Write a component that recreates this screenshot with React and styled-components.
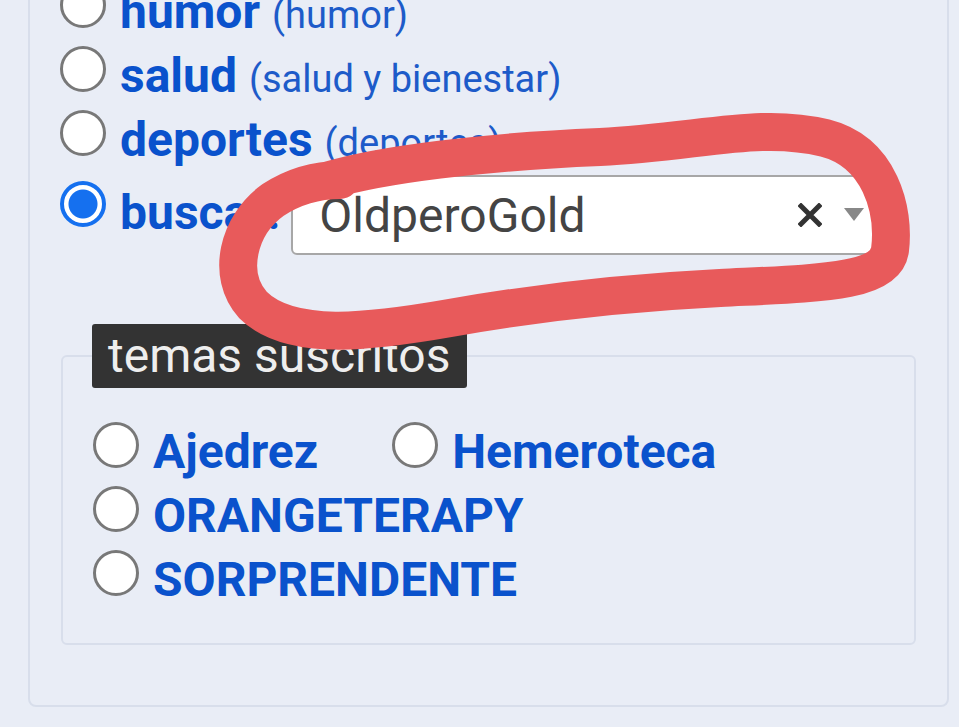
import React from 'react'
import styled, { createGlobalStyle } from 'styled-components'

const GlobalStyle = createGlobalStyle`
    html, body {
        margin: 0;
        padding: 0;
        background: #e9edf6;
        font-family: Roboto, "Liberation Sans", sans-serif;
        overflow: hidden;
    }
`

const Page = styled.div`
    position: relative;
    display: flow-root;
    width: 959px;
    box-sizing: border-box;
    padding: 0 10px 18px 28px;
`

const Panel = styled.div`
    margin-top: -42px;
    border: 2px solid #d8deeb;
    border-radius: 8px;
    padding: 13px 31px 60px 30px;
`

const Row = styled.label`
    display: flex;
    align-items: ${(p) => (p.top ? 'flex-start' : 'center')};
    height: ${(p) => (p.top ? 'auto' : '64px')};
    gap: 14px;
    cursor: pointer;
`

const Radio = styled.input.attrs({ type: 'radio' })`
    appearance: none;
    flex: none;
    margin: ${(p) => p.$offset || 0}px 0 0 0;
    width: 46px;
    height: 46px;
    border-radius: 50%;
    border: 3px solid #787878;
    background: #fff;
    box-sizing: border-box;

    &:checked {
        border: 4px solid #1570ef;
        background: radial-gradient(circle, #1570ef 0 14px, #fff 15px);
    }
`

const Name = styled.span`
    font-weight: 700;
    font-size: 48px;
    color: #0a52cc;
    white-space: nowrap;
    padding-top: ${(p) => (p.$offset === undefined ? 13 : 0)}px;
    margin-top: ${(p) => p.$offset || 0}px;
`

const Desc = styled.span`
    font-weight: 400;
    font-size: 38px;
    color: #1d5bc9;
    margin-left: 12px;
`

const Select = styled.div`
    flex: none;
    display: flex;
    align-items: center;
    width: 597px;
    height: 80px;
    margin: 10px 0 0 -3px;
    box-sizing: border-box;
    border: 2px solid #a7a7a7;
    border-radius: 6px;
    background: #fff;
    padding: 0 22px 0 26px;
    font-size: 48px;
    color: #444;
`

const Value = styled.span`
    flex: 1;
`

const Fieldset = styled.fieldset`
    margin: 69px 0 0 1px;
    border: 2px solid #d8deeb;
    border-radius: 6px;
    padding: 25px 30px 38px 30px;
`

const Legend = styled.legend`
    background: #333;
    color: #eeeeee;
    font-size: 48px;
    line-height: 64px;
    padding: 0 16px;
    border-radius: 3px;
    margin-left: -1px;
`

const Topics = styled.div`
    display: flex;
    flex-wrap: wrap;
    column-gap: 74px;
`

const Scribble = styled.svg`
    position: absolute;
    top: 0;
    left: 0;
    pointer-events: none;
`

const topics = ['Ajedrez', 'Hemeroteca', 'ORANGETERAPY', 'SORPRENDENTE']

export default function App() {
    return (
        <Page>
            <GlobalStyle />
            <Panel>
                <Row>
                    <Radio name="tema" />
                    <Name>humor<Desc>(humor)</Desc></Name>
                </Row>
                <Row>
                    <Radio name="tema" />
                    <Name>salud<Desc>(salud y bienestar)</Desc></Name>
                </Row>
                <Row>
                    <Radio name="tema" />
                    <Name>deportes<Desc>(deportes)</Desc></Name>
                </Row>
                <Row top>
                    <Radio name="tema" defaultChecked $offset={16} />
                    <Name $offset={19}>buscar:</Name>
                    <Select>
                        <Value>OldperoGold</Value>
                        <svg width="24" height="24" viewBox="0 0 24 24">
                            <path d="M3 3 L21 21 M21 3 L3 21" stroke="#333" strokeWidth="5" strokeLinecap="square" />
                        </svg>
                        <svg width="20" height="14" viewBox="0 0 20 14" style={{ marginLeft: 22 }}>
                            <path d="M0 0 H20 L10 13 Z" fill="#888" />
                        </svg>
                    </Select>
                </Row>
                <Fieldset>
                    <Legend>temas suscritos</Legend>
                    <Topics>
                        {topics.map((t) => (
                            <Row key={t}>
                                <Radio name="suscrito" />
                                <Name>{t}</Name>
                            </Row>
                        ))}
                    </Topics>
                </Fieldset>
            </Panel>
            <Scribble width="959" height="727" viewBox="0 0 959 727">
                <path
                    d="M330 180 C380 165, 480 152, 600 147 C700 142, 760 122, 825 138 C880 152, 895 210, 890 250 C885 283, 820 283, 720 288 C620 293, 540 302, 450 318 C370 332, 290 342, 253 305 C226 275, 238 225, 273 200 C293 187, 315 180, 340 180"
                    fill="none"
                    stroke="#e85a5b"
                    strokeWidth="38"
                    strokeLinecap="round"
                    strokeLinejoin="round"
                />
            </Scribble>
        </Page>
    )
}
